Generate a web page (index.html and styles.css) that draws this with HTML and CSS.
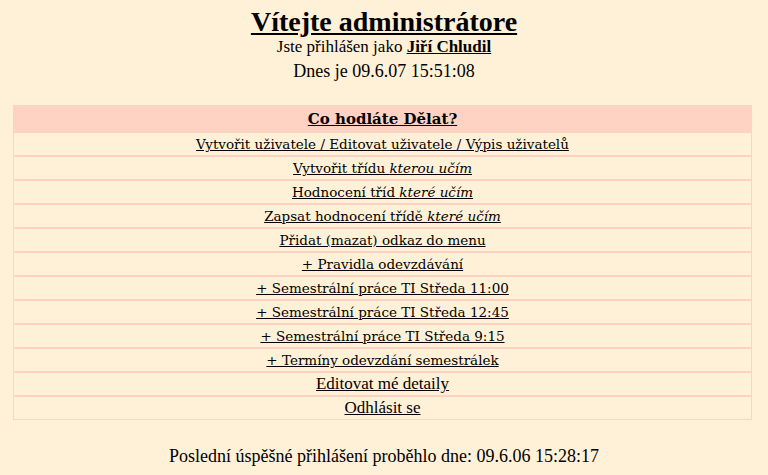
FILE: index.html
```html
<!DOCTYPE html>
<html lang="cs">
<head>
<meta charset="utf-8">
<title>Administrace</title>
<link rel="stylesheet" href="styles.css">
</head>
<body>
<div class="head">
  <h1 class="title"><a href="#">Vítejte administrátore</a></h1>
  <p class="line">Jste přihlášen jako <a class="user" href="#">Jiří Chludil</a></p>
  <p class="line date">Dnes je 09.6.07 15:51:08</p>
</div>
<table class="menu">
  <tr><th><a href="#">Co hodláte Dělat?</a></th></tr>
  <tr><td><a href="#">Vytvořit uživatele / Editovat uživatele / Výpis uživatelů</a></td></tr>
  <tr><td><a href="#">Vytvořit třídu <i>kterou učím</i></a></td></tr>
  <tr><td><a href="#">Hodnocení tříd <i>které učím</i></a></td></tr>
  <tr><td><a href="#">Zapsat hodnocení třídě <i>které učím</i></a></td></tr>
  <tr><td><a href="#">Přidat (mazat) odkaz do menu</a></td></tr>
  <tr><td><a href="#">+ Pravidla odevzdávání</a></td></tr>
  <tr><td><a href="#">+ Semestrální práce TI Středa 11:00</a></td></tr>
  <tr><td><a href="#">+ Semestrální práce TI Středa 12:45</a></td></tr>
  <tr><td><a href="#">+ Semestrální práce TI Středa 9:15</a></td></tr>
  <tr><td><a href="#">+ Termíny odevzdání semestrálek</a></td></tr>
  <tr><td><a class="times" href="#">Editovat mé detaily</a></td></tr>
  <tr><td><a class="times" href="#">Odhlásit se</a></td></tr>
</table>
<p class="foot">Poslední úspěšné přihlášení proběhlo dne: 09.6.06 15:28:17</p>
</body>
</html>
```
FILE: styles.css
```css
html, body {
  background: #fff0d8;
}
body {
  margin: 8px;
  font-family: "Liberation Serif", "Times New Roman", serif;
  font-size: 17px;
  color: #000;
}
a {
  color: #000;
}
.head {
  text-align: center;
}
.title {
  margin: 0;
  font-size: 28px;
  line-height: 27px;
  font-weight: bold;
}
.line {
  margin: 0;
  line-height: 24px;
}
.date {
  font-size: 18px;
}
.user {
  font-weight: bold;
}
.menu {
  margin: 22px 0 0 5px;
  width: 739px;
  border: 1px solid #ffd3c3;
  border-collapse: separate;
  border-spacing: 0;
}
.menu th, .menu td {
  text-align: center;
  padding: 0;
  height: 22px;
  border-top: 2px solid #ffd3c3;
  font-family: "DejaVu Serif", serif;
  font-size: 13.5px;
  font-weight: normal;
}
.menu th {
  background: #ffd3c3;
  font-weight: bold;
  font-size: 15px;
  height: 25px;
  border-top: 0;
}
.menu .times {
  font-family: "Liberation Serif", serif;
  font-size: 17px;
}
.foot {
  margin: 24px 0 0 0;
  font-size: 18px;
  line-height: 24px;
  text-align: center;
}
```
